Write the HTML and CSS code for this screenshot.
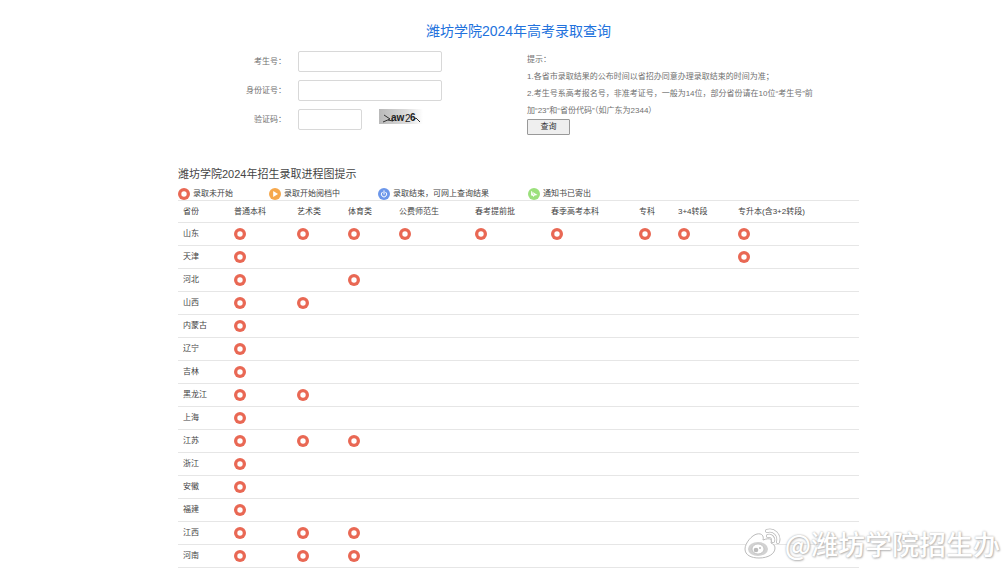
FILE: index.html
```html
<!DOCTYPE html>
<html lang="zh-CN">
<head>
<meta charset="utf-8">
<meta name="viewport" content="width=device-width, initial-scale=1">
<title>潍坊学院2024年高考录取查询</title>
<link rel="stylesheet" href="styles.css">
</head>
<body>
<svg class="sprite" aria-hidden="true">
  <symbol id="wait" viewBox="0 0 12 12"><circle cx="6" cy="6" r="6" fill="#e96854"/><circle cx="6" cy="6" r="2.7" fill="#fff"/></symbol>
  <symbol id="play" viewBox="0 0 12 12"><circle cx="6" cy="6" r="6" fill="#f6a84c"/><path d="M4.2 3 9 6 4.2 9z" fill="#fff"/></symbol>
  <symbol id="power" viewBox="0 0 12 12"><circle cx="6" cy="6" r="6" fill="#6c97ea"/><path d="M4.2 4.2a2.7 2.7 0 1 0 3.6 0M6 2.8v3.4" fill="none" stroke="#fff" stroke-width="1" stroke-linecap="round"/></symbol>
  <symbol id="sent" viewBox="0 0 12 12"><circle cx="6" cy="6" r="6" fill="#9be07c"/><path d="M3 3 9.6 7 6.6 7.4 5.4 9 4.8 7.8 3.2 7.6z" fill="#fff"/><path d="M4 4 6 7" stroke="#9be07c" stroke-width="0.6"/></symbol>
</svg>
<main class="page">
  <h1 class="title">潍坊学院2024年高考录取查询</h1>
  <form class="query">
    <div class="fields">
      <label class="label" for="ksh">考生号：</label>
      <input class="input" id="ksh" type="text">
      <label class="label" for="sfz">身份证号：</label>
      <input class="input" id="sfz" type="text">
      <label class="label" for="yzm">验证码：</label>
      <div class="code">
        <input class="input input-code" id="yzm" type="text">
        <svg class="captcha" viewBox="0 0 44 15" role="img" aria-label="验证码">
          <defs><linearGradient id="fade"><stop offset="0" stop-color="#b9b9b9"/><stop offset="0.6" stop-color="#dadada"/><stop offset="1" stop-color="#fff"/></linearGradient></defs>
          <rect width="44" height="15" fill="url(#fade)"/>
          <path d="M5 6 11 10 4 13M9 11 14 12M34 11 37 9 41 13" fill="none" stroke="#333" stroke-width="1"/>
          <text class="captcha-text" x="12" y="12">aw</text><text class="captcha-text captcha-thin" x="26" y="13">2</text><text class="captcha-text" x="31" y="12">6</text>
        </svg>
      </div>
    </div>
    <div class="hints">
      <p>提示：</p>
      <p>1.各省市录取结果的公布时间以省招办同意办理录取结束的时间为准；</p>
      <p>2.考生号系高考报名号，非准考证号，一般为14位，部分省份请在10位“考生号”前<br>加“23”和“省份代码”（如广东为2344）</p>
      <button class="submit" type="button">查询</button>
    </div>
  </form>
  <h2 class="subtitle">潍坊学院2024年招生录取进程图提示</h2>
  <ul class="legend">
    <li><svg class="dot"><use href="#wait"/></svg>录取未开始</li>
    <li><svg class="dot"><use href="#play"/></svg>录取开始阅档中</li>
    <li><svg class="dot"><use href="#power"/></svg>录取结束，可网上查询结果</li>
    <li><svg class="dot"><use href="#sent"/></svg>通知书已寄出</li>
  </ul>
  <table class="progress">
    <colgroup><col class="c-area"><col class="c-general"><col class="c-short"><col class="c-short"><col class="c-mid"><col class="c-mid"><col class="c-spring"><col class="c-college"><col class="c-turn"><col></colgroup>
    <thead>
      <tr><th>省份</th><th>普通本科</th><th>艺术类</th><th>体育类</th><th>公费师范生</th><th>春考提前批</th><th>春季高考本科</th><th>专科</th><th>3+4转段</th><th>专升本(含3+2转段)</th></tr>
    </thead>
    <tbody>
      <tr><td>山东</td><td><svg class="dot"><use href="#wait"/></svg></td><td><svg class="dot"><use href="#wait"/></svg></td><td><svg class="dot"><use href="#wait"/></svg></td><td><svg class="dot"><use href="#wait"/></svg></td><td><svg class="dot"><use href="#wait"/></svg></td><td><svg class="dot"><use href="#wait"/></svg></td><td><svg class="dot"><use href="#wait"/></svg></td><td><svg class="dot"><use href="#wait"/></svg></td><td><svg class="dot"><use href="#wait"/></svg></td></tr>
      <tr><td>天津</td><td><svg class="dot"><use href="#wait"/></svg></td><td></td><td></td><td></td><td></td><td></td><td></td><td></td><td><svg class="dot"><use href="#wait"/></svg></td></tr>
      <tr><td>河北</td><td><svg class="dot"><use href="#wait"/></svg></td><td></td><td><svg class="dot"><use href="#wait"/></svg></td><td></td><td></td><td></td><td></td><td></td><td></td></tr>
      <tr><td>山西</td><td><svg class="dot"><use href="#wait"/></svg></td><td><svg class="dot"><use href="#wait"/></svg></td><td></td><td></td><td></td><td></td><td></td><td></td><td></td></tr>
      <tr><td>内蒙古</td><td><svg class="dot"><use href="#wait"/></svg></td><td></td><td></td><td></td><td></td><td></td><td></td><td></td><td></td></tr>
      <tr><td>辽宁</td><td><svg class="dot"><use href="#wait"/></svg></td><td></td><td></td><td></td><td></td><td></td><td></td><td></td><td></td></tr>
      <tr><td>吉林</td><td><svg class="dot"><use href="#wait"/></svg></td><td></td><td></td><td></td><td></td><td></td><td></td><td></td><td></td></tr>
      <tr><td>黑龙江</td><td><svg class="dot"><use href="#wait"/></svg></td><td><svg class="dot"><use href="#wait"/></svg></td><td></td><td></td><td></td><td></td><td></td><td></td><td></td></tr>
      <tr><td>上海</td><td><svg class="dot"><use href="#wait"/></svg></td><td></td><td></td><td></td><td></td><td></td><td></td><td></td><td></td></tr>
      <tr><td>江苏</td><td><svg class="dot"><use href="#wait"/></svg></td><td><svg class="dot"><use href="#wait"/></svg></td><td><svg class="dot"><use href="#wait"/></svg></td><td></td><td></td><td></td><td></td><td></td><td></td></tr>
      <tr><td>浙江</td><td><svg class="dot"><use href="#wait"/></svg></td><td></td><td></td><td></td><td></td><td></td><td></td><td></td><td></td></tr>
      <tr><td>安徽</td><td><svg class="dot"><use href="#wait"/></svg></td><td></td><td></td><td></td><td></td><td></td><td></td><td></td><td></td></tr>
      <tr><td>福建</td><td><svg class="dot"><use href="#wait"/></svg></td><td></td><td></td><td></td><td></td><td></td><td></td><td></td><td></td></tr>
      <tr><td>江西</td><td><svg class="dot"><use href="#wait"/></svg></td><td><svg class="dot"><use href="#wait"/></svg></td><td><svg class="dot"><use href="#wait"/></svg></td><td></td><td></td><td></td><td></td><td></td><td></td></tr>
      <tr><td>河南</td><td><svg class="dot"><use href="#wait"/></svg></td><td><svg class="dot"><use href="#wait"/></svg></td><td><svg class="dot"><use href="#wait"/></svg></td><td></td><td></td><td></td><td></td><td></td><td></td></tr>
    </tbody>
  </table>
</main>
<div class="watermark">
  <svg class="weibo" viewBox="0 0 38 32" aria-hidden="true">
    <path d="M14 6C9 7 2 15 2 21c0 6 6 9 14 9 9 0 16-4 16-10 0-3-2-4-4-5 1-3 0-6-8-3 1-4-1-7-6-6z" fill="#fff" stroke="#bbb" stroke-width="1"/>
    <ellipse cx="15" cy="21" rx="10" ry="7" fill="#d2d2d2"/>
    <ellipse cx="15" cy="21" rx="6" ry="5" fill="#fff" stroke="#bbb" stroke-width="0.8"/>
    <circle cx="13" cy="22" r="2.3" fill="#bbb"/><circle cx="17" cy="20" r="1" fill="#bbb"/>
    <path d="M24 3c7-2 13 4 11 11M25 8c3-1 6 2 5 5" fill="none" stroke="#bbb" stroke-width="4" stroke-linecap="round"/>
    <path d="M24 3c7-2 13 4 11 11M25 8c3-1 6 2 5 5" fill="none" stroke="#fff" stroke-width="2.4" stroke-linecap="round"/>
  </svg>
  <span>@潍坊学院招生办</span>
</div>
</body>
</html>
```
FILE: styles.css
```css
* { box-sizing: border-box; }
body {
  position: relative;
  margin: 0;
  padding: 20px 0 0 29px;
  background: #fff;
  color: #444;
  font: 8px/12px "Liberation Sans", "Noto Sans CJK SC", sans-serif;
}
h1, h2, p, ul { margin: 0; padding: 0; font-weight: 400; }
.sprite { position: absolute; width: 0; height: 0; }
.page { max-width: 681px; margin: 0 auto; }
.title { color: #2272dd; font-size: 14px; line-height: 22px; text-align: center; }
.query {
  display: grid;
  grid-template-columns: 349px 1fr;
  align-items: start;
  margin-top: 9px;
  color: #707070;
}
.fields {
  display: grid;
  grid-template-columns: 108px 144px;
  column-gap: 12px;
  row-gap: 8px;
  align-items: center;
}
.label { text-align: right; }
.input {
  display: block;
  width: 100%;
  height: 21px;
  padding: 0 4px;
  border: 1px solid #d8d8d8;
  border-radius: 2px;
  background: #fff;
  font: inherit;
}
.code { display: flex; gap: 17px; }
.input-code { width: 64px; }
.captcha { width: 44px; height: 15px; }
.captcha-text { font: bold 10px "Liberation Sans", sans-serif; fill: #222; }
.captcha-thin { font-weight: 400; }
.hints { line-height: 17px; }
.submit {
  display: block;
  width: 43px;
  height: 16px;
  padding: 0;
  border: 1px solid #999;
  border-radius: 1px;
  background: #efefef;
  color: #333;
  font: inherit;
  line-height: 14px;
}
.subtitle { margin-top: 30px; font-size: 11px; line-height: 18px; }
.legend {
  display: grid;
  grid-template-columns: 91px 109px 150px auto;
  margin-top: 5px;
  list-style: none;
}
.legend li { display: flex; align-items: center; gap: 3px; }
.dot { display: block; width: 12px; height: 12px; }
.progress {
  width: 100%;
  border-collapse: collapse;
  table-layout: fixed;
}
.progress tr { border-top: 1px solid #e6e6e6; border-bottom: 1px solid #e6e6e6; }
.progress th, .progress td {
  height: 23px;
  padding: 0 0 0 5px;
  font-weight: 400;
  text-align: left;
  white-space: nowrap;
}
.progress th { height: 22px; }
.c-area { width: 51px; }
.c-general { width: 63px; }
.c-short { width: 51px; }
.c-mid { width: 76px; }
.c-spring { width: 88px; }
.c-college { width: 39px; }
.c-turn { width: 60px; }
.watermark {
  position: absolute;
  right: 8px;
  bottom: 4px;
  display: flex;
  align-items: center;
  gap: 4px;
  color: #fff;
  font: 500 27px/40px "Noto Sans CJK SC", sans-serif;
  text-shadow: 0 0 2px #aaa, 1px 1px 2px #bbb;
}
.weibo { width: 38px; height: 32px; }
```
